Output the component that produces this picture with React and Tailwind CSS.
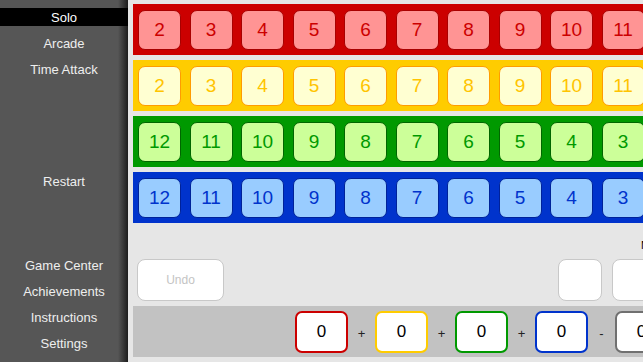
const MENU_TOP = ['Solo', 'Arcade', 'Time Attack'];
const MENU_BOTTOM = ['Game Center', 'Achievements', 'Instructions', 'Settings'];

const ASC = [2, 3, 4, 5, 6, 7, 8, 9, 10, 11, 12];
const DESC = [12, 11, 10, 9, 8, 7, 6, 5, 4, 3, 2];

const ROWS = [
  { nums: ASC, row: 'bg-[#cc0000]', tile: 'bg-[#ff9494] border-[#a80000] text-[#cc0000]' },
  { nums: ASC, row: 'bg-[#ffcc00]', tile: 'bg-[#ffffd2] border-[#ff9c00] text-[#ffc400]' },
  { nums: DESC, row: 'bg-[#009900]', tile: 'bg-[#ccff99] border-[#006600] text-[#009900]' },
  { nums: DESC, row: 'bg-[#0033cc]', tile: 'bg-[#99ccff] border-[#002299] text-[#0033cc]' },
];

const SCORES = [
  { border: 'border-[#cc0000]', op: '+' },
  { border: 'border-[#ffcc00]', op: '+' },
  { border: 'border-[#009900]', op: '+' },
  { border: 'border-[#0033cc]', op: '-' },
  { border: 'border-[#707070]', op: null },
];

const MenuItem = ({ label, active }) => (
  <div
    className={`h-[18px] flex items-center justify-center text-[13px] leading-none ${
      active ? 'bg-black text-white' : 'text-[#eeeeee]'
    }`}
  >
    {label}
  </div>
);

const App = () => {
  return (
    <div
      className="flex w-[643px] h-[362px] overflow-hidden bg-[#e6e6e6]"
      style={{ fontFamily: '"Liberation Sans", Arial, sans-serif' }}
    >
      {/* side menu */}
      <div className="w-[128px] shrink-0 flex flex-col pt-[8px] bg-[linear-gradient(to_right,#565656_118px,#1c1c1c_128px)]">
        <div className="flex flex-col gap-[8px]">
          {MENU_TOP.map((m, i) => (
            <MenuItem key={m} label={m} active={i === 0} />
          ))}
        </div>
        <div className="mt-[94px]">
          <MenuItem label="Restart" />
        </div>
        <div className="mt-[66px] flex flex-col gap-[8px]">
          {MENU_BOTTOM.map((m) => (
            <MenuItem key={m} label={m} />
          ))}
        </div>
      </div>

      {/* board */}
      <div className="flex-1 min-w-0 flex flex-col pl-[5px] pt-[4px] overflow-hidden">
        <div className="flex flex-col gap-[5px]">
          {ROWS.map((r, i) => (
            <div key={i} className={`h-[51px] flex items-start pl-[5px] pt-[6px] gap-[8.5px] overflow-hidden ${r.row}`}>
              {r.nums.map((n) => (
                <div
                  key={n}
                  className={`w-[43px] h-[40px] shrink-0 rounded-[7px] border-[1.5px] flex items-center justify-center text-[19px] ${r.tile}`}
                >
                  {n}
                </div>
              ))}
            </div>
          ))}
        </div>

        <div className="h-[36px] pl-[508px] pt-[17px] whitespace-nowrap text-[11px] leading-[11px] text-black">
          Max
        </div>

        <div className="h-[42px] flex items-stretch">
          <button className="ml-[4px] w-[87px] shrink-0 rounded-[8px] border border-[#c8c8c8] bg-white text-[12px] text-[#c4c4c4]">
            Undo
          </button>
          <div className="ml-[334px] shrink-0 flex gap-[10px]">
            <div className="w-[44px] shrink-0 rounded-[8px] border border-[#c8c8c8] bg-white" />
            <div className="w-[44px] shrink-0 rounded-[8px] border border-[#c8c8c8] bg-white" />
          </div>
        </div>

        <div className="mt-[5px] h-[51px] shrink-0 bg-[#c2c2c2] flex items-center pl-[162px]">
          {SCORES.map((s, i) => (
            <div key={i} className="flex items-center shrink-0">
              <div
                className={`w-[53px] h-[42px] shrink-0 rounded-[7px] border-2 bg-white flex items-center justify-center text-[17px] text-black ${s.border}`}
              >
                0
              </div>
              {s.op && (
                <div className="w-[27px] pt-[4px] text-center text-[13px] text-[#222222]">{s.op}</div>
              )}
            </div>
          ))}
        </div>
      </div>
    </div>
  );
};

export default App;
